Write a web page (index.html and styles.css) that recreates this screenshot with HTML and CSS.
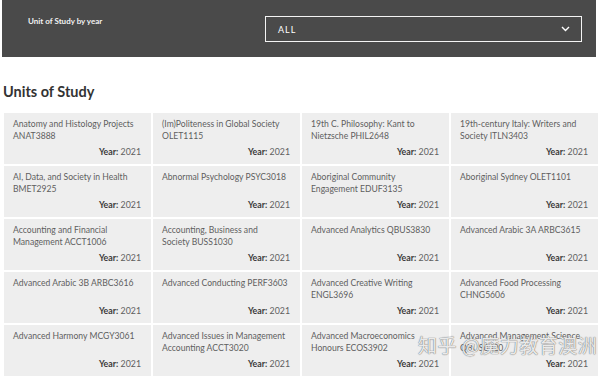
FILE: index.html
```html
<!DOCTYPE html>
<html>
<head>
<meta charset="utf-8">
<link rel="stylesheet" href="styles.css">
</head>
<body>
<div class="page">
  <div class="filter-bar">
    <div class="filter-label">Unit of Study by year</div>
    <div class="select">
      <span class="select-value">ALL</span>
      <svg class="chevron" width="9" height="6" viewBox="0 0 9 6"><path d="M1 1 L4.5 4.5 L8 1" fill="none" stroke="#fff" stroke-width="1.4"/></svg>
    </div>
  </div>
  <h2 class="heading">Units of Study</h2>
  <div class="grid">
    <div class="cell"><div class="title">Anatomy and Histology Projects ANAT3888</div><div class="year"><b>Year:</b> 2021</div></div>
    <div class="cell"><div class="title">(Im)Politeness in Global Society OLET1115</div><div class="year"><b>Year:</b> 2021</div></div>
    <div class="cell"><div class="title">19th C. Philosophy: Kant to Nietzsche PHIL2648</div><div class="year"><b>Year:</b> 2021</div></div>
    <div class="cell"><div class="title">19th-century Italy: Writers and Society ITLN3403</div><div class="year"><b>Year:</b> 2021</div></div>
    <div class="cell"><div class="title">AI, Data, and Society in Health BMET2925</div><div class="year"><b>Year:</b> 2021</div></div>
    <div class="cell"><div class="title">Abnormal Psychology PSYC3018</div><div class="year"><b>Year:</b> 2021</div></div>
    <div class="cell"><div class="title">Aboriginal Community Engagement EDUF3135</div><div class="year"><b>Year:</b> 2021</div></div>
    <div class="cell"><div class="title">Aboriginal Sydney OLET1101</div><div class="year"><b>Year:</b> 2021</div></div>
    <div class="cell"><div class="title">Accounting and Financial Management ACCT1006</div><div class="year"><b>Year:</b> 2021</div></div>
    <div class="cell"><div class="title">Accounting, Business and<br>Society BUSS1030</div><div class="year"><b>Year:</b> 2021</div></div>
    <div class="cell"><div class="title">Advanced Analytics QBUS3830</div><div class="year"><b>Year:</b> 2021</div></div>
    <div class="cell"><div class="title">Advanced Arabic 3A ARBC3615</div><div class="year"><b>Year:</b> 2021</div></div>
    <div class="cell"><div class="title">Advanced Arabic 3B ARBC3616</div><div class="year"><b>Year:</b> 2021</div></div>
    <div class="cell"><div class="title">Advanced Conducting PERF3603</div><div class="year"><b>Year:</b> 2021</div></div>
    <div class="cell"><div class="title">Advanced Creative Writing ENGL3696</div><div class="year"><b>Year:</b> 2021</div></div>
    <div class="cell"><div class="title">Advanced Food Processing CHNG5606</div><div class="year"><b>Year:</b> 2021</div></div>
    <div class="cell"><div class="title">Advanced Harmony MCGY3061</div><div class="year"><b>Year:</b> 2021</div></div>
    <div class="cell"><div class="title">Advanced Issues in Management Accounting ACCT3020</div><div class="year"><b>Year:</b> 2021</div></div>
    <div class="cell"><div class="title">Advanced Macroeconomics Honours ECOS3902</div><div class="year"><b>Year:</b> 2021</div></div>
    <div class="cell"><div class="title">Advanced Management Science QBUS6320</div><div class="year"><b>Year:</b> 2021</div></div>
  </div>
  <div class="watermark">知乎 @魔力教育澳洲</div>
</div>
</body>
</html>
```
FILE: styles.css
```css
html, body {
  margin: 0;
  padding: 0;
  background: #fff;
  font-family: Lato, "Noto Sans", sans-serif;
}
.page {
  position: relative;
  width: 600px;
  height: 378px;
  overflow: hidden;
}
.filter-bar {
  margin: 0 4px 0 2px;
  height: 57px;
  background: #4a4a4a;
  display: flex;
  align-items: flex-start;
  box-sizing: border-box;
  padding: 15px 14px 0 26px;
}
.filter-label {
  color: #f2f2f2;
  font-size: 8px;
  font-weight: 700;
  width: 237px;
  line-height: 12px;
}
.select {
  flex: 1;
  height: 26px;
  margin-top: 1px;
  box-sizing: border-box;
  border: 1.5px solid #f4f4f4;
  display: flex;
  align-items: center;
  justify-content: space-between;
  padding: 0 11px 0 12px;
}
.select-value {
  color: #fff;
  font-size: 9px;
  font-weight: 400;
  letter-spacing: 1px;
}
.chevron {
  display: block;
}
.heading {
  margin: 26px 0 0 3px;
  height: 18px;
  font-size: 14.5px;
  line-height: 18px;
  font-weight: 700;
  color: #333;
}
.grid {
  margin: 12px 2px 0 4px;
  display: grid;
  grid-template-columns: repeat(4, 1fr);
  grid-auto-rows: 51px;
  gap: 2px;
}
.cell {
  background: #eeeeee;
  display: flex;
  flex-direction: column;
  padding: 6px 7px 7px 9px;
  box-sizing: border-box;
}
.title {
  font-size: 8.6px;
  line-height: 11.5px;
  color: #5e5e5e;
}
.year {
  margin-top: auto;
  padding-right: 3px;
  text-align: right;
  font-size: 8.8px;
  line-height: 11px;
  color: #5e5e5e;
}
.year b {
  color: #3a3a3a;
  font-weight: 700;
}
.watermark {
  position: absolute;
  left: 418px;
  top: 333px;
  white-space: nowrap;
  font-family: "Noto Sans CJK SC", sans-serif;
  font-size: 19px;
  line-height: 24px;
  color: rgba(255, 255, 255, 0.85);
  text-shadow: 0 0 1px #777, 0 0 1px #777;
  letter-spacing: 0.5px;
}
```
